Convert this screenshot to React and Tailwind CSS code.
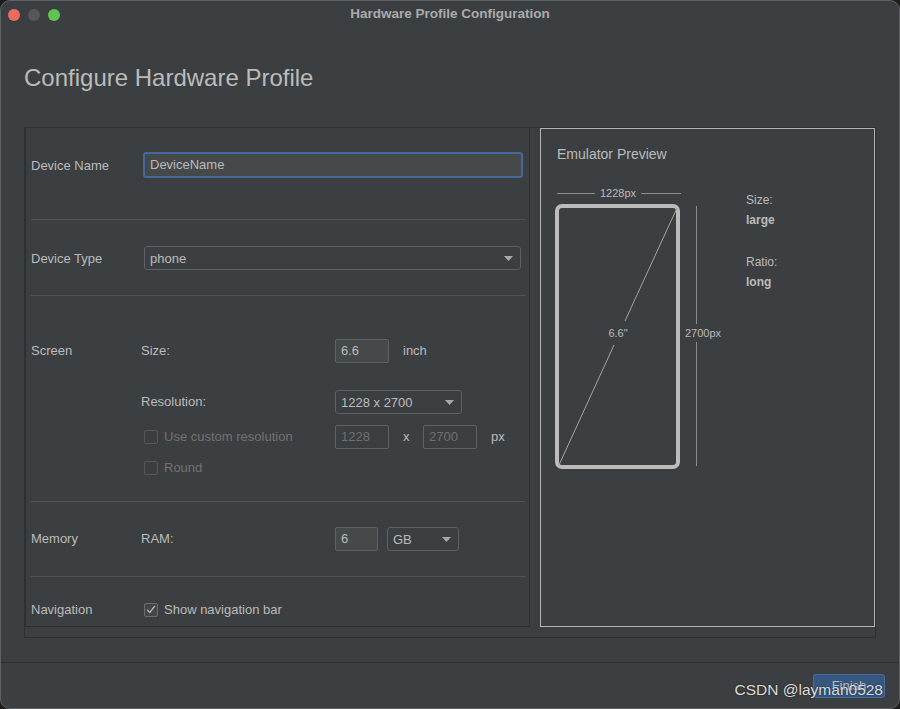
import React from 'react';

// Darcula-style "Hardware Profile Configuration" dialog.

const Arrow = () => (
  <svg width="9" height="5" viewBox="0 0 9 5" className="shrink-0">
    <path d="M0 0h9L4.5 5z" fill="#a9a9a9" />
  </svg>
);

function Select({ value, className }) {
  return (
    <div className={`flex items-center justify-between h-[24px] border border-[#5e6062] rounded-[3px] bg-[#3c3f41] pl-[5px] pr-[7px] pt-px text-[13px] text-[#bbbbbb] ${className}`}>
      <span>{value}</span>
      <Arrow />
    </div>
  );
}

function Field({ value, className, disabled }) {
  return (
    <div
      className={`flex items-center h-[24px] border border-[#5e6062] rounded-[2px] pl-[5px] text-[13px] ${
        disabled ? 'bg-[#3c3f41] text-[#6f6f6f]' : 'bg-[#45494a] text-[#bbbbbb]'
      } ${className}`}
    >
      {value}
    </div>
  );
}

function Check({ checked, disabled }) {
  return (
    <span
      className={`inline-flex items-center justify-center w-[14px] h-[14px] rounded-[2px] border ${
        disabled ? 'border-[#555759]' : 'border-[#6b6d6f] bg-[#43474a]'
      }`}
    >
      {checked && (
        <svg width="10" height="9" viewBox="0 0 10 9">
          <path d="M1.2 4.8 3.8 7.6 8.8 1" fill="none" stroke="#bbbbbb" strokeWidth="1.3" />
        </svg>
      )}
    </span>
  );
}

const Sep = () => <div className="h-px bg-[#515356] ml-[5px] mr-[4px]" />;

function LeftPanel() {
  return (
    <div className="w-[505px] flex flex-col border-l border-r border-b border-[#2e3033] text-[13px] text-[#bbbbbb]">
      {/* Device name */}
      <div className="h-[91px] flex items-start pt-[24px] pl-[5px]">
        <div className="w-[112px] leading-[26px] pt-px">Device Name</div>
        <div className="w-[380px] h-[26px] flex items-center border-2 border-[#46689a] rounded-[3px] bg-[#45494a] pl-[5px] text-[#bbbbbb]">
          DeviceName
        </div>
      </div>
      <Sep />
      {/* Device type */}
      <div className="h-[75px] flex items-start pt-[26px] pl-[5px]">
        <div className="w-[113px] leading-[24px] pt-px">Device Type</div>
        <Select value="phone" className="w-[377px]" />
      </div>
      <Sep />
      {/* Screen */}
      <div className="h-[205px] flex items-start pt-[42px] pl-[5px]">
        <div className="w-[110px] leading-[24px] pt-px">Screen</div>
        <div className="flex flex-col">
          <div className="flex items-center h-[24px] pt-px">
            <div className="w-[194px]">Size:</div>
            <Field value="6.6" className="w-[54px]" />
            <span className="ml-[14px]">inch</span>
          </div>
          <div className="flex items-center h-[24px] mt-[28px]">
            <div className="w-[194px]">Resolution:</div>
            <Select value="1228 x 2700" className="w-[127px]" />
          </div>
          <div className="flex items-center h-[24px] mt-[11px]">
            <div className="w-[194px] flex items-center pl-[3px] text-[#727272]">
              <Check disabled />
              <span className="ml-[6px]">Use custom resolution</span>
            </div>
            <Field value="1228" className="w-[54px]" disabled />
            <span className="w-[34px] pl-[14px]">x</span>
            <Field value="2700" className="w-[54px]" disabled />
            <span className="ml-[14px]">px</span>
          </div>
          <div className="flex items-center h-[24px] mt-[7px] pl-[3px] text-[#727272]">
            <Check disabled />
            <span className="ml-[6px]">Round</span>
          </div>
        </div>
      </div>
      <Sep />
      {/* Memory */}
      <div className="h-[74px] flex items-start pt-[25px] pl-[5px]">
        <div className="w-[110px] leading-[24px]">Memory</div>
        <div className="w-[194px] leading-[24px]">RAM:</div>
        <Field value="6" className="w-[43px]" />
        <Select value="GB" className="w-[72px] ml-[9px]" />
      </div>
      <Sep />
      {/* Navigation */}
      <div className="h-[49px] flex items-start pt-[20px] pl-[5px]">
        <div className="w-[113px] leading-[24px] pt-px">Navigation</div>
        <div className="flex items-center h-[24px] pt-px">
          <Check checked />
          <span className="ml-[6px]">Show navigation bar</span>
        </div>
      </div>
    </div>
  );
}

function Preview() {
  const gap = 'stroke-[#8c8c8c]';
  return (
    <div className="ml-[10px] w-[335px] h-[499px] border border-[#b4b4b4] pl-[16px] text-[#bbbbbb]">
      <div className="pt-[16px] text-[14px] leading-[18px]">Emulator Preview</div>
      <div className="flex mt-[20px]">
        <div className="relative w-[189px] h-[290px] text-[11px] leading-[14px]">
          <svg width="189" height="290" className="absolute left-0 top-0 overflow-visible">
            <line x1="0" y1="10.5" x2="38" y2="10.5" className={gap} strokeWidth="1" />
            <line x1="84" y1="10.5" x2="124" y2="10.5" className={gap} strokeWidth="1" />
            <rect x="0" y="23" width="121" height="261" rx="5" fill="none" stroke="#bcbcbc" strokeWidth="4" />
            <line x1="2" y1="282" x2="57" y2="162" stroke="#a3a3a3" strokeWidth="1" />
            <line x1="68" y1="138" x2="120" y2="25" stroke="#a3a3a3" strokeWidth="1" />
            <line x1="139.5" y1="23" x2="139.5" y2="141" className={gap} strokeWidth="1" />
            <line x1="139.5" y1="159" x2="139.5" y2="283" className={gap} strokeWidth="1" />
          </svg>
          <span className="absolute left-[38px] top-[3px] w-[46px] text-center">1228px</span>
          <span className="absolute left-[41px] top-[143px] w-[40px] text-center">6.6"</span>
          <span className="absolute left-[128px] top-[143px]">2700px</span>
        </div>
        <div className="pt-[7px] text-[12px] leading-[20px]">
          <div>Size:</div>
          <div className="font-bold">large</div>
          <div className="mt-[22px]">Ratio:</div>
          <div className="font-bold">long</div>
        </div>
      </div>
    </div>
  );
}

export default function App() {
  return (
    <div className="relative w-[900px] h-[709px] bg-[#1c1c1c] font-['Liberation_Sans',Arial,sans-serif]">
      <div className="w-full h-full flex flex-col rounded-[10px] border border-[#5f6164] bg-[#3c3f41] overflow-hidden">
        {/* title bar */}
        <div className="h-[27px] grid grid-cols-[1fr_auto_1fr] items-center">
          <div className="flex items-center gap-[8px] pl-[7px]">
            <span className="w-[12px] h-[12px] rounded-full bg-[#ee6a5f]" />
            <span className="w-[12px] h-[12px] rounded-full bg-[#56585b]" />
            <span className="w-[12px] h-[12px] rounded-full bg-[#5fc454]" />
          </div>
          <div className="text-[13.5px] font-bold text-[#a9abad] -mt-px">Hardware Profile Configuration</div>
          <div />
        </div>

        <h1 className="mt-[36px] pl-[23px] text-[24px] leading-[28px] text-[#bbbbbb]">Configure Hardware Profile</h1>

        <div className="mt-[35px] ml-[23px] w-[852px] h-[511px] border border-[#2e3033] flex items-start">
          <LeftPanel />
          <Preview />
        </div>

        <div className="mt-[24px] h-px bg-[#2b2d2f]" />

        <div className="flex justify-end pt-[11px] pr-[14px]">
          <button className="w-[72px] h-[24px] rounded-[3px] bg-[#365880] border border-[#4a6c9b] text-[13px] text-[#bbbbbb]">
            Finish
          </button>
        </div>
      </div>

      <div className="absolute right-[17px] top-[680px] text-[15.5px] leading-[20px] text-[#dcdcdc] [text-shadow:0_0_2px_rgba(0,0,0,0.6)]">
        CSDN @layman0528
      </div>
    </div>
  );
}
